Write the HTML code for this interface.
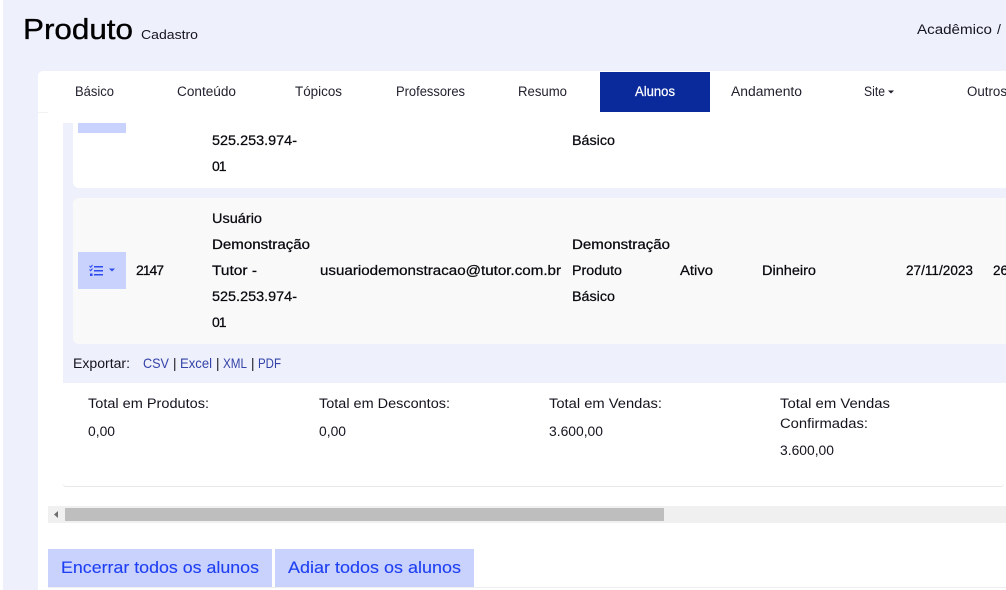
<!DOCTYPE html>
<html lang="pt-BR"><head><meta charset="utf-8"><title>Produto</title>
<style>
html,body{margin:0;padding:0;background:#fff}
body{width:1006px;height:590px;overflow:hidden}
svg{display:block}
text{font-family:"Liberation Sans",sans-serif;font-size:13.5px;fill:#14141f}
.m{fill:#08080f;stroke:#08080f;stroke-width:.25px}
.n{fill:#22222f;font-size:13.5px}
.l{fill:#3342a8;font-size:14px}
.b{fill:#1f40f2;font-size:17px;stroke:#1f40f2;stroke-width:.12px}
.t{fill:#000;stroke:#000;stroke-width:.35px;font-size:29px}
</style></head><body>
<svg width="1006" height="590" viewBox="0 0 1006 590" xmlns="http://www.w3.org/2000/svg">
<rect x="3" width="1003" height="590" fill="#eef0fb"/>
<path d="M43 71H1006V590H38V76a5 5 0 0 1 5-5z" fill="#fff"/>
<rect x="38" y="112" width="10" height="1" fill="#f2f2f2"/>

<text class="t" x="23" y="39" textLength="110" lengthAdjust="spacingAndGlyphs">Produto</text>
<text x="141" y="39" textLength="57" lengthAdjust="spacingAndGlyphs" style="font-size:12.5px">Cadastro</text>
<text x="917" y="34" textLength="75" lengthAdjust="spacingAndGlyphs">Acadêmico</text>
<text x="997" y="34" style="font-size:14px">/</text>

<rect x="600" y="72" width="110" height="40" fill="#0a2a9c"/>
<g>
<text class="n" x="75" y="96" textLength="39" lengthAdjust="spacingAndGlyphs">Básico</text>
<text class="n" x="177" y="96" textLength="59" lengthAdjust="spacingAndGlyphs">Conteúdo</text>
<text class="n" x="295" y="96" textLength="47" lengthAdjust="spacingAndGlyphs">Tópicos</text>
<text class="n" x="396" y="96" textLength="69" lengthAdjust="spacingAndGlyphs">Professores</text>
<text class="n" x="518" y="96" textLength="49" lengthAdjust="spacingAndGlyphs">Resumo</text>
<text x="635" y="96" textLength="40" lengthAdjust="spacingAndGlyphs" style="fill:#fff;stroke:#fff;stroke-width:.25px">Alunos</text>
<text class="n" x="731" y="96" textLength="71" lengthAdjust="spacingAndGlyphs">Andamento</text>
<text class="n" x="864" y="96" textLength="21" lengthAdjust="spacingAndGlyphs">Site</text>
<path d="M888 90.500h6l-3 3z" fill="#1c1c28"/>
<text class="n" x="967" y="96" textLength="40" lengthAdjust="spacingAndGlyphs">Outros</text>
</g>

<rect x="63" y="123" width="943" height="260" fill="#eef0fb"/>
<path d="M73 123H1006V188H79a6 6 0 0 1-6-6z" fill="#fff"/>
<rect x="78" y="123" width="48" height="10" fill="#c9d1fd"/>
<path d="M1006 198H79a6 6 0 0 0-6 6V338a6 6 0 0 0 6 6H1006z" fill="#f9f9f9"/>

<text class="m" x="212" y="145" textLength="85" lengthAdjust="spacingAndGlyphs">525.253.974-</text>
<text class="m" x="212" y="171" style="font-size:14px" letter-spacing="-1">01</text>
<text class="m" x="572" y="145" textLength="43" lengthAdjust="spacingAndGlyphs">Básico</text>

<rect x="78" y="252" width="48" height="37" fill="#c9d1fd"/>
<g fill="#2d4bf0">
<rect x="94" y="266" width="9" height="1.500"/><rect x="94" y="270" width="9" height="1.500"/><rect x="94" y="274" width="9" height="1.500"/>
<rect x="90" y="273.500" width="2.500" height="2.500"/>
<path d="M89.500 269.500l1.200 1.200 1.800-2.200M89.500 266l1.200 1.200 1.800-2.200" fill="none" stroke="#2d4bf0" stroke-width="1"/>
<path d="M109 268.500h6l-3 3z"/>
</g>
<text class="m" x="136" y="275" style="font-size:14px" textLength="28">2147</text>
<text class="m" x="212" y="223" textLength="50" lengthAdjust="spacingAndGlyphs">Usuário</text>
<text class="m" x="212" y="249" textLength="98" lengthAdjust="spacingAndGlyphs">Demonstração</text>
<text class="m" x="212" y="275" textLength="45" lengthAdjust="spacingAndGlyphs">Tutor -</text>
<text class="m" x="212" y="301" textLength="85" lengthAdjust="spacingAndGlyphs">525.253.974-</text>
<text class="m" x="212" y="327" style="font-size:14px" letter-spacing="-1">01</text>
<text class="m" x="320" y="275" textLength="241" lengthAdjust="spacingAndGlyphs">usuariodemonstracao@tutor.com.br</text>
<text class="m" x="572" y="249" textLength="98" lengthAdjust="spacingAndGlyphs">Demonstração</text>
<text class="m" x="572" y="275" textLength="50" lengthAdjust="spacingAndGlyphs">Produto</text>
<text class="m" x="572" y="301" textLength="43" lengthAdjust="spacingAndGlyphs">Básico</text>
<text class="m" x="680" y="275" textLength="33" lengthAdjust="spacingAndGlyphs">Ativo</text>
<text class="m" x="762" y="275" textLength="54" lengthAdjust="spacingAndGlyphs">Dinheiro</text>
<text class="m" x="906" y="275" textLength="67" lengthAdjust="spacingAndGlyphs">27/11/2023</text>
<text class="m" x="993" y="275" textLength="15" lengthAdjust="spacingAndGlyphs">26</text>

<text x="73" y="368" textLength="57" lengthAdjust="spacingAndGlyphs">Exportar:</text>
<text class="l" x="143" y="368" textLength="26" lengthAdjust="spacingAndGlyphs">CSV</text>
<text x="173" y="368">|</text>
<text class="l" x="180" y="368" textLength="32" lengthAdjust="spacingAndGlyphs">Excel</text>
<text x="216" y="368">|</text>
<text class="l" x="223" y="368" textLength="24" lengthAdjust="spacingAndGlyphs">XML</text>
<text x="251" y="368">|</text>
<text class="l" x="258" y="368" textLength="23" lengthAdjust="spacingAndGlyphs">PDF</text>

<text x="88" y="408" textLength="121" lengthAdjust="spacingAndGlyphs">Total em Produtos:</text>
<text x="88" y="436" textLength="27" lengthAdjust="spacingAndGlyphs">0,00</text>
<text x="319" y="408" textLength="131" lengthAdjust="spacingAndGlyphs">Total em Descontos:</text>
<text x="319" y="436" textLength="27" lengthAdjust="spacingAndGlyphs">0,00</text>
<text x="549" y="408" textLength="113" lengthAdjust="spacingAndGlyphs">Total em Vendas:</text>
<text x="549" y="436" textLength="54" lengthAdjust="spacingAndGlyphs">3.600,00</text>
<text x="780" y="408" textLength="110" lengthAdjust="spacingAndGlyphs">Total em Vendas</text>
<text x="780" y="428" textLength="88" lengthAdjust="spacingAndGlyphs">Confirmadas:</text>
<text x="780" y="455" textLength="54" lengthAdjust="spacingAndGlyphs">3.600,00</text>

<path d="M63 483a3 3 0 0 0 3 3H1001a3 3 0 0 0 3-3v1a3 3 0 0 1-3 3H66a3 3 0 0 1-3-3z" fill="#e8e8e8"/>

<rect x="48" y="506" width="958" height="17" fill="#f0f0f0"/>
<rect x="65" y="508" width="599" height="13" fill="#bebebe"/>
<path d="M54 514.500l4-3.500v7z" fill="#6e6e6e"/>

<rect x="48" y="549" width="224" height="38" fill="#c9d1fd"/>
<rect x="275" y="549" width="199" height="38" fill="#c9d1fd"/>
<text class="b" x="61" y="573" textLength="198" lengthAdjust="spacingAndGlyphs">Encerrar todos os alunos</text>
<text class="b" x="288" y="573" textLength="173" lengthAdjust="spacingAndGlyphs">Adiar todos os alunos</text>
<rect x="48" y="587" width="958" height="1" fill="#eeeeee"/>
</svg>
</body></html>
